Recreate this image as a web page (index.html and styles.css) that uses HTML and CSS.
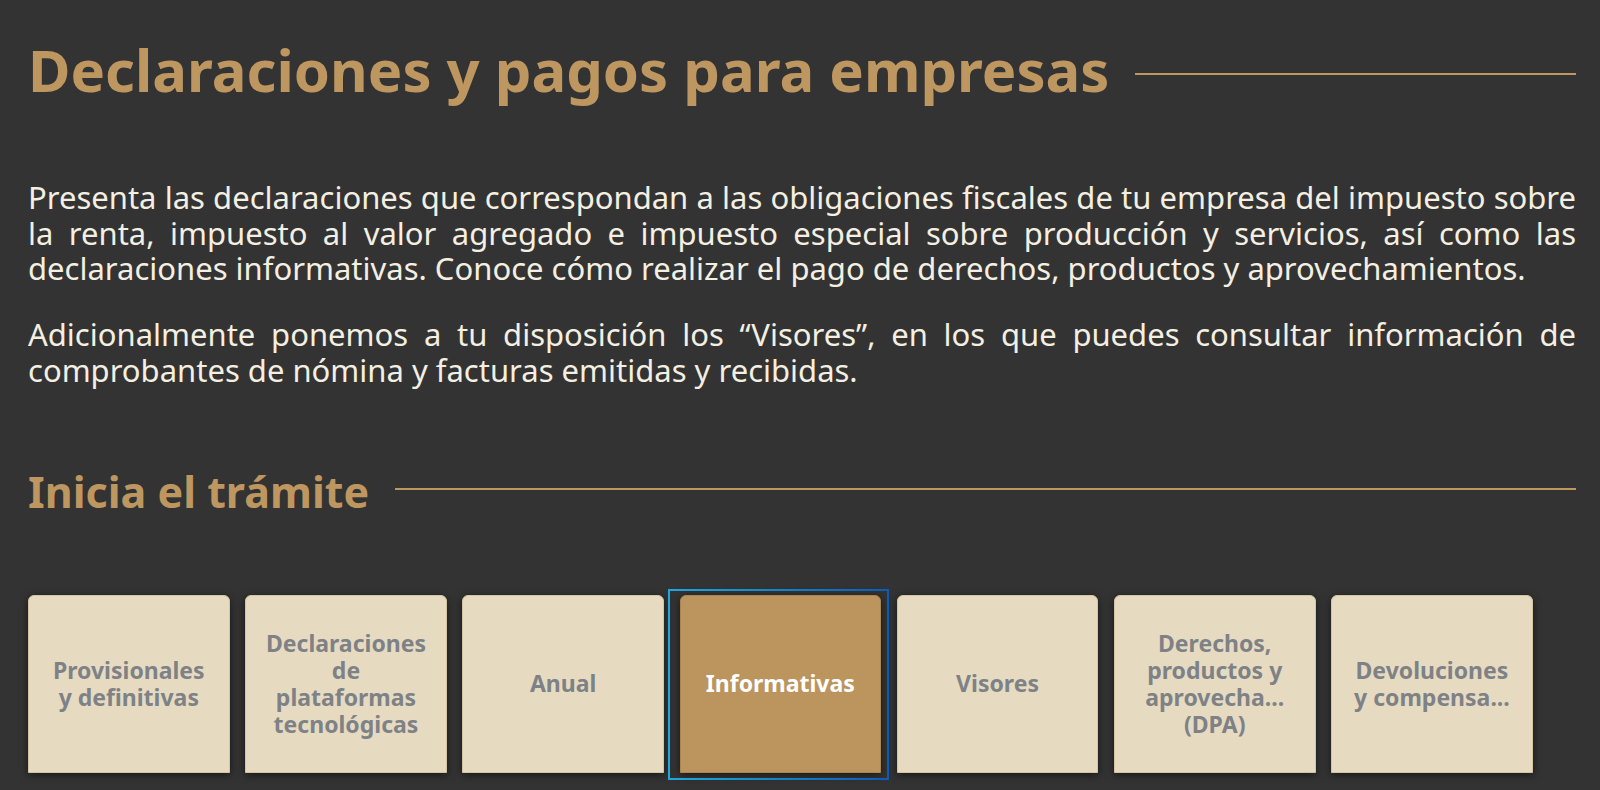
FILE: index.html
```html
<!DOCTYPE html>
<html lang="es">
<head>
<meta charset="utf-8">
<title>Declaraciones y pagos para empresas</title>
<link rel="stylesheet" href="styles.css">
</head>
<body>
<main class="page">
  <header class="title-row">
    <h1 class="title">Declaraciones y pagos para empresas</h1>
    <span class="rule"></span>
  </header>
  <section class="intro">
    <p>Presenta las declaraciones que correspondan a las obligaciones fiscales de tu empresa del impuesto sobre la renta, impuesto al valor agregado e impuesto especial sobre producción y servicios, así como las declaraciones informativas. Conoce cómo realizar el pago de derechos, productos y aprovechamientos.</p>
    <p>Adicionalmente ponemos a tu disposición los “Visores”, en los que puedes consultar información de comprobantes de nómina y facturas emitidas y recibidas.</p>
  </section>
  <header class="sub-row">
    <h2 class="subtitle">Inicia el trámite</h2>
    <span class="rule"></span>
  </header>
  <nav class="tiles">
    <a class="tile">Provisionales y definitivas</a>
    <a class="tile">Declaraciones de plataformas tecnológicas</a>
    <a class="tile">Anual</a>
    <a class="tile tile-active">Informativas</a>
    <a class="tile">Visores</a>
    <a class="tile">Derechos, productos y aprovecha... (DPA)</a>
    <a class="tile">Devoluciones y compensa...</a>
  </nav>
</main>
</body>
</html>
```
FILE: styles.css
```css
html, body {
  margin: 0;
  padding: 0;
  background: #333333;
}
body {
  font-family: "Noto Sans", "Open Sans", "DejaVu Sans", sans-serif;
  color: #f3efe2;
  width: 1600px;
  height: 790px;
  overflow: hidden;
}
.page {
  padding: 0 24px 0 28px;
}
.title-row, .sub-row {
  display: flex;
  align-items: center;
  gap: 26px;
}
.rule {
  flex: 1;
  height: 2px;
  background: #bd9660;
}
.title {
  margin: 0;
  padding-top: 28px;
  font-size: 58px;
  line-height: 84px;
  font-weight: 700;
  color: #bd9660;
  white-space: nowrap;
}
.title-row .rule {
  margin-top: 36px;
}
.intro {
  margin-top: 68px;
}
.intro p {
  margin: 0 0 30px;
  font-size: 31px;
  line-height: 35.7px;
  text-align: justify;
}
.sub-row {
  margin-top: 75px;
}
.subtitle {
  margin: 0;
  font-size: 43px;
  line-height: 56px;
  font-weight: 700;
  color: #bd9660;
  white-space: nowrap;
}
.sub-row .rule {
  margin-bottom: 6px;
}
.tiles {
  display: flex;
  gap: 15.6px;
  margin-top: 75px;
}
.tile {
  position: relative;
  box-sizing: border-box;
  width: 201.6px;
  height: 178px;
  flex: none;
  display: flex;
  align-items: center;
  justify-content: center;
  padding: 0 17px;
  text-align: center;
  font-size: 23px;
  line-height: 27px;
  font-weight: 700;
  color: #7e8286;
  background: #e6dbc1;
  border: 1px solid #d3c4a3;
  border-radius: 6px 6px 0 0;
  box-shadow: 0 2px 9px rgba(0, 0, 0, 0.55);
}
.tile-active {
  background: #bb955d;
  border-color: #a98651;
  color: #ffffff;
}
.tile-active::after {
  content: "";
  position: absolute;
  left: -13px;
  right: -9px;
  top: -7px;
  bottom: -8px;
  border: 2px solid;
  border-image: linear-gradient(90deg, #1ea9de, #0c5cb6) 1;
  pointer-events: none;
}
```
